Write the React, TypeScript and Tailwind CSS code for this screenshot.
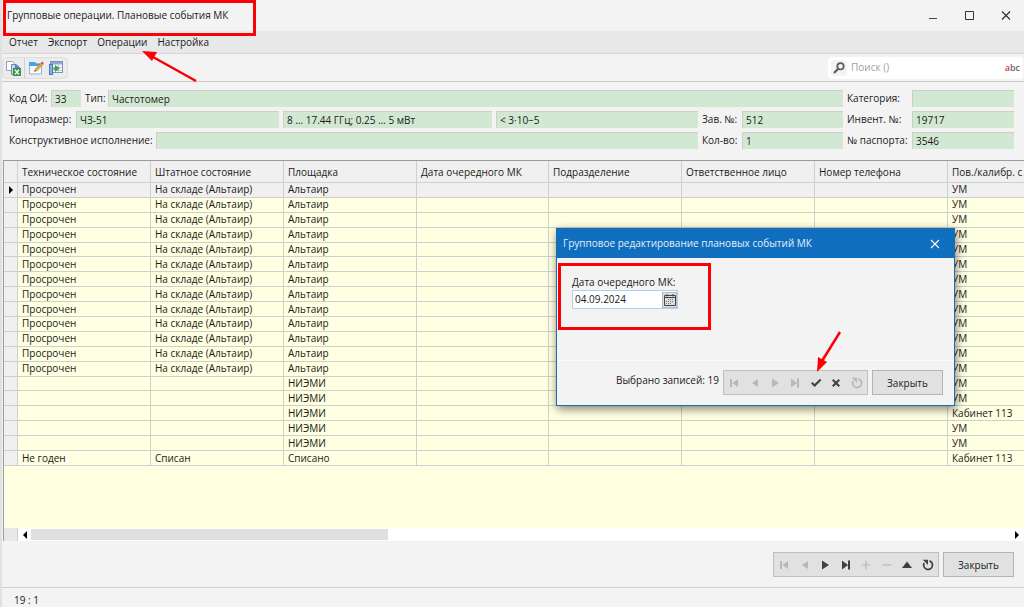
import { clsx } from "clsx";
import type { ReactNode } from "react";

const MENU = ["Отчет", "Экспорт", "Операции", "Настройка"];

const COLUMNS = [
  { name: "Техническое состояние", width: "w-[133px]" },
  { name: "Штатное состояние", width: "w-[133px]" },
  { name: "Площадка", width: "w-[133px]" },
  { name: "Дата очередного МК", width: "w-[132px]" },
  { name: "Подразделение", width: "w-[133px]" },
  { name: "Ответственное лицо", width: "w-[133px]" },
  { name: "Номер телефона", width: "w-[133px]" },
  { name: "Пов./калибр. с", width: "" },
];

type Row = { tech: string; staff: string; site: string; place: string };

const overdue: Row = {
  tech: "Просрочен",
  staff: "На складе (Альтаир)",
  site: "Альтаир",
  place: "УМ",
};
const niemi: Row = { tech: "", staff: "", site: "НИЭМИ", place: "УМ" };

const ROWS: Row[] = [
  ...Array.from({ length: 13 }, () => overdue),
  niemi,
  niemi,
  { ...niemi, place: "Кабинет 113" },
  niemi,
  niemi,
  { tech: "Не годен", staff: "Списан", site: "Списано", place: "Кабинет 113" },
];

const NAV_SHAPES = {
  first: <path d="M2 2h2v8H2zM10 2v8L4.500 6z" />,
  prev: <path d="M9 2v8L3 6z" />,
  next: <path d="M3 1.500v9l7-4.500z" />,
  last: <path d="M8 1.500h2v9H8zM2 1.500v9l6-4.500z" />,
  add: <path d="M5.400 1.500h1.200v3.900h3.900v1.200H6.600v3.900H5.400V6.600H1.500V5.400h3.900z" />,
  remove: <path d="M1.500 5.400h9v1.200h-9z" />,
  edit: <path d="M6 2.500l5 6.500H1z" />,
  post: <path d="M1 6.500l1.600-1.600 2 2L10 1.700l1.400 1.500L4.700 10z" />,
  cancel: (
    <path d="M2 3.400L3.400 2 6 4.600 8.600 2 10 3.400 7.400 6 10 8.600 8.600 10 6 7.400 3.400 10 2 8.600 4.600 6z" />
  ),
  refresh: (
    <>
      <path
        d="M7.500 1.900A4.400 4.400 0 1 1 2.200 4"
        fill="none"
        stroke="currentColor"
        strokeWidth="1.700"
      />
      <path d="M.8.800h5.200V6L4.300 4.300z" />
    </>
  ),
};

type NavName = keyof typeof NAV_SHAPES;
type NavItem = { name: NavName; label: string; enabled?: boolean };

const MAIN_NAV: NavItem[] = [
  { name: "first", label: "Первая запись" },
  { name: "prev", label: "Предыдущая запись" },
  { name: "next", label: "Следующая запись", enabled: true },
  { name: "last", label: "Последняя запись", enabled: true },
  { name: "add", label: "Добавить" },
  { name: "remove", label: "Удалить" },
  { name: "edit", label: "Изменить", enabled: true },
  { name: "refresh", label: "Обновить", enabled: true },
];

const DIALOG_NAV: NavItem[] = [
  { name: "first", label: "Первая запись" },
  { name: "prev", label: "Предыдущая запись" },
  { name: "next", label: "Следующая запись" },
  { name: "last", label: "Последняя запись" },
  { name: "post", label: "Сохранить", enabled: true },
  { name: "cancel", label: "Отменить", enabled: true },
  { name: "refresh", label: "Обновить" },
];

const Navigator = ({ items, className }: { items: NavItem[]; className: string }) => (
  <div className={clsx("flex h-[25px] border border-[#bfbfbf] bg-[#e1e1e1]", className)}>
    {items.map(({ name, label, enabled }) => (
      <button
        key={name}
        type="button"
        aria-label={label}
        disabled={!enabled}
        className={clsx(
          "flex flex-1 items-center justify-center",
          enabled ? "text-[#404040]" : "text-[#b8b8b8]",
        )}
      >
        <svg viewBox="0 0 12 12" className="size-3" fill="currentColor">
          {NAV_SHAPES[name]}
        </svg>
      </button>
    ))}
  </div>
);

const CloseButton = () => (
  <button
    type="button"
    className="h-[25px] w-[71px] border border-[#b4b4b4] bg-[#e1e1e1] pt-0.5 text-[#1a1a1a]"
  >
    Закрыть
  </button>
);

const Field = ({
  id,
  label,
  value,
  className,
  labelClassName,
}: {
  id: string;
  label?: string;
  value: string;
  className?: string;
  labelClassName?: string;
}) => (
  <div className={clsx("flex min-w-0 items-center", className)}>
    {label && (
      <label htmlFor={id} className={clsx("shrink-0 whitespace-nowrap", labelClassName)}>
        {label}
      </label>
    )}
    <input
      id={id}
      readOnly
      aria-label={label ? undefined : id}
      defaultValue={value}
      className="h-[17px] w-full min-w-0 border-t border-l border-[#c8d3c8] bg-[#d3e8d3] px-[3px] outline-none"
    />
  </div>
);

const ExportIcon = () => (
  <svg viewBox="0 0 16 16" className="size-4">
    <path d="M1.500 1.500h6l2 2v7h-8z" fill="#fafcff" stroke="#98a4b8" />
    <path d="M6.500 4.500h5l3 3v7h-8z" fill="#c5daf4" stroke="#7389ad" />
    <path d="M10.500 4.500v3.500h4" fill="#4e7fc8" stroke="#4e7fc8" />
    <rect x="8" y="8" width="8" height="8" fill="#3d9346" />
    <path d="M10 9.800l4 4.600M14 9.800l-4 4.600" stroke="#fff" strokeWidth="1.400" />
  </svg>
);

const EditIcon = () => (
  <svg viewBox="0 0 16 16" className="size-4">
    <path d="M1.500 2.500h5l1 1.500h6v10h-12z" fill="#f4f9ff" stroke="#8fb4d8" />
    <path d="M1 2h6l1 1.500h6V6H1z" fill="#43a2e6" />
    <path d="M6.500 11.500l1-2.700 6-6.300 1.700 1.700-6 6.300z" fill="#f0a33a" stroke="#b87425" strokeWidth="0.500" />
    <path d="M13 3l1.300-1.400 1.600 1.600-1.300 1.400z" fill="#d8533c" />
    <path d="M6.500 11.500l.5-1.500 1 1z" fill="#333" />
  </svg>
);

const TableIcon = () => (
  <svg viewBox="0 0 16 16" className="size-4">
    <rect x="2.500" y="1.500" width="12" height="11" fill="#f7faff" stroke="#7c92b8" />
    <path d="M3 2h11v2.500H3z" fill="#8fa9d4" />
    <path d="M4 7.500h10M4 10.500h10M7.500 4v8M10.500 4v8" stroke="#b9c6dc" />
    <rect x="1.500" y="4.500" width="3" height="10" fill="#87b2ea" stroke="#4a78bd" />
    <path d="M7 5l5 3.300L7 12V9.800H5.500V7.500H7z" fill="#45a23f" />
  </svg>
);

const SearchIcon = () => (
  <svg viewBox="0 0 12 12" className="size-3" fill="none" stroke="#5c5c5c">
    <circle cx="7.500" cy="4.300" r="3.200" strokeWidth="1.700" />
    <path d="M5.200 6.800L1 11" strokeWidth="2.200" />
  </svg>
);

const CalendarIcon = () => (
  <svg viewBox="0 0 12 12" className="size-3" fill="none" stroke="#444">
    <path d="M.5 1.500h11v10H.5zM.5 3.500h11M3 0v2.500M9 0v2.500" />
    <path d="M4 5.500h6M2 7.500h8M2 9.500h6" strokeDasharray="1 1" stroke="#777" />
  </svg>
);

const ToolButton = ({ label, children }: { label: string; children: ReactNode }) => (
  <button type="button" aria-label={label} className="flex w-5 items-center justify-center">
    {children}
  </button>
);

const TitleBar = () => (
  <header className="flex h-[31px] items-center justify-between pl-[5px]">
    <h1>Групповые операции. Плановые события МК</h1>
    <div className="flex">
      <button type="button" aria-label="Свернуть" className="flex w-[37px] justify-center">
        <svg viewBox="0 0 10 10" className="size-2.5" stroke="#444">
          <path d="M1 7.500h8" />
        </svg>
      </button>
      <button type="button" aria-label="Развернуть" className="flex w-[37px] justify-center">
        <svg viewBox="0 0 10 10" className="size-2.5" fill="none" stroke="#333">
          <path d="M.5.500h8v8h-8z" />
        </svg>
      </button>
      <button type="button" aria-label="Закрыть окно" className="flex w-9 justify-center">
        <svg viewBox="0 0 10 10" className="size-2.5" stroke="#333" strokeWidth="1.200">
          <path d="M1 .5l8 8M9 .5l-8 8" />
        </svg>
      </button>
    </div>
  </header>
);

const Toolbar = () => (
  <div className="flex h-7 items-center justify-between border-b border-[#c9c9c9]">
    <div className="flex h-[22px] rounded-sm border border-[#dedede] bg-[#ececec] pr-px">
      <ToolButton label="Экспорт в Excel">
        <ExportIcon />
      </ToolButton>
      <span className="mx-px w-px bg-[#d0d0d0]" />
      <ToolButton label="Редактировать">
        <EditIcon />
      </ToolButton>
      <ToolButton label="Столбцы">
        <TableIcon />
      </ToolButton>
    </div>
    <div className="mr-px flex h-[22px] w-[195px] items-center rounded-sm bg-white px-[3px]">
      <span className="flex size-4 shrink-0 items-center justify-center rounded-sm bg-[#f3f3f3]">
        <SearchIcon />
      </span>
      <input
        type="text"
        aria-label="Поиск"
        placeholder="Поиск ()"
        className="w-full min-w-0 px-1 outline-none placeholder:text-[#a0a0a0]"
      />
      <span className="text-[9px] font-semibold text-[#666]">
        <span className="text-[#d9363c]">a</span>bc
      </span>
    </div>
  </div>
);

const DeviceForm = () => (
  <form className="grid grid-cols-[1fr_141px_167px] gap-x-1 gap-y-1 pt-2 pr-2.5 pb-[11px] pl-[7px]">
    <div className="col-span-2 flex gap-1">
      <Field id="code" label="Код ОИ:" value="33" className="w-[72px]" labelClassName="w-[42px]" />
      <Field id="type" label="Тип:" value="Частотомер" className="flex-1" labelClassName="w-[23px]" />
    </div>
    <Field id="category" label="Категория:" value="" labelClassName="w-[65px]" />
    <div className="flex gap-1">
      <Field
        id="size"
        label="Типоразмер:"
        value="ЧЗ-51"
        className="w-[270px]"
        labelClassName="w-[67px]"
      />
      <Field id="range" value="8 … 17.44 ГГц; 0.25 … 5 мВт" className="w-[209px]" />
      <Field id="accuracy" value="< 3·10−5" className="flex-1" />
    </div>
    <Field id="serial" label="Зав. №:" value="512" labelClassName="w-10" />
    <Field id="inventory" label="Инвент. №:" value="19717" labelClassName="w-[65px]" />
    <Field id="design" label="Конструктивное исполнение:" value="" labelClassName="w-[147px]" />
    <Field id="count" label="Кол-во:" value="1" labelClassName="w-10" />
    <Field id="passport" label="№ паспорта:" value="3546" labelClassName="w-[65px]" />
  </form>
);

const EventsGrid = () => (
  <section className="ml-px flex flex-1 flex-col border-t border-l border-[#9a9a9a] bg-[#ffffe1]">
    <div className="flex-1 overflow-hidden">
      <table className="h-[305px] w-full table-fixed border-separate border-spacing-0 text-left leading-[13px]">
        <colgroup>
          <col className="w-3.5" />
          {COLUMNS.map(({ name, width }) => (
            <col key={name} className={width} />
          ))}
        </colgroup>
        <thead>
          <tr className="h-[22px] bg-[#f0f0f0]">
            <th className="border-r border-b border-[#d0d0d0]" />
            {COLUMNS.map(({ name }) => (
              <th
                key={name}
                className="overflow-hidden border-r border-b border-[#d0d0d0] px-1 pt-0.5 font-normal whitespace-nowrap last:border-r-0 last:pr-0"
              >
                {name}
              </th>
            ))}
          </tr>
        </thead>
        <tbody>
          {ROWS.map((row, i) => (
            <tr key={i} className={i === 0 ? "bg-[#f0f0f0]" : undefined}>
              <td className="border-r border-b border-[#cfcfcf] bg-[#f0f0f0] p-0">
                {i === 0 && (
                  <svg viewBox="0 0 4 8" className="mx-auto h-2 w-1">
                    <path d="M0 0v8l4-4z" />
                  </svg>
                )}
              </td>
              {[row.tech, row.staff, row.site, "", "", "", "", row.place].map((text, j) => (
                <td
                  key={j}
                  className="overflow-hidden border-r border-b border-[#cfcfcf] px-1 py-0 whitespace-nowrap last:border-r-0"
                >
                  {text}
                </td>
              ))}
            </tr>
          ))}
        </tbody>
      </table>
    </div>
    <div className="flex h-[13px] items-center bg-white">
      <span className="h-full w-3.5 border-r border-[#cfcfcf] bg-[#e8e8e8]" />
      <button type="button" aria-label="Прокрутить влево" className="flex w-[13px] justify-center">
        <svg viewBox="0 0 4 8" className="h-2 w-1">
          <path d="M4 0v8L0 4z" />
        </svg>
      </button>
      <div className="h-full flex-1 py-px">
        <div className="h-full w-[36.500%] bg-[#dfdfdf]" />
      </div>
      <button type="button" aria-label="Прокрутить вправо" className="flex w-3.5 justify-center">
        <svg viewBox="0 0 4 8" className="h-2 w-1">
          <path d="M0 0v8l4-4z" />
        </svg>
      </button>
    </div>
  </section>
);

const EditDialog = () => (
  <div
    role="dialog"
    aria-labelledby="dialog-title"
    className="absolute top-[228px] left-[556px] w-[399px] border border-[#1c6cb4] bg-[#f3f3f3] shadow-[1px_3px_9px_rgba(0,0,0,0.5)]"
  >
    <div className="flex h-[29px] items-center justify-between bg-[#106ebe] pl-1.5 text-[#e4effa]">
      <h2 id="dialog-title">Групповое редактирование плановых событий МК</h2>
      <button type="button" aria-label="Закрыть диалог" className="flex w-[39px] justify-center">
        <svg viewBox="0 0 10 10" className="size-2.5" stroke="#fff" strokeWidth="1.100">
          <path d="M1 1l8 8M9 1L1 9" />
        </svg>
      </button>
    </div>
    <div className="h-[102px] px-[15px] pt-[17px]">
      <label htmlFor="next-date" className="block">
        Дата очередного МК:
      </label>
      <div className="flex h-[19px] w-[106px] items-center border border-[#a9d1f5] bg-white">
        <input
          id="next-date"
          type="text"
          defaultValue="04.09.2024"
          className="w-full min-w-0 px-0.5 outline-none"
        />
        <button
          type="button"
          aria-label="Открыть календарь"
          className="flex h-4 w-[15px] shrink-0 items-center justify-center border border-[#bdbdbd] bg-[#dedede]"
        >
          <CalendarIcon />
        </button>
      </div>
    </div>
    <div className="flex items-center justify-end gap-1 border-t border-[#fbfbfb] pt-[9px] pr-[11px] pb-2.5">
      <span className="pb-1">Выбрано записей: 19</span>
      <Navigator items={DIALOG_NAV} className="w-[145px]" />
      <CloseButton />
    </div>
    <div className="absolute top-[34px] left-px h-[67px] w-[153px] border-3 border-[#fb0007]" />
  </div>
);

// Red marks that lead the reader through the steps
const Annotations = () => (
  <div className="pointer-events-none absolute inset-0">
    <div className="absolute top-0 left-[3px] h-9 w-[253px] border-3 border-[#fb0007]" />
    <svg viewBox="0 0 56 32" className="absolute top-[51px] left-[142px] h-8 w-14" fill="#fb0007">
      <path d="M0 0l15 1-5 9z" />
      <path d="M11 6l43 24" stroke="#fb0007" strokeWidth="2.500" />
    </svg>
    <svg viewBox="0 0 26 42" className="absolute top-[331px] left-[816px] h-[42px] w-[26px]" fill="#fb0007">
      <path d="M1 41l1-15 9 5z" />
      <path d="M6 30L24 1" stroke="#fb0007" strokeWidth="2.500" />
    </svg>
  </div>
);

export default function App() {
  return (
    <div className="relative flex min-h-screen flex-col border-l-2 border-[#dde2e2] bg-[#f3f3f3] font-['Open_Sans','Noto_Sans',sans-serif] text-[10px] leading-[15px] text-[#1a1a1a]">
      <TitleBar />
      <nav className="flex h-[23px] items-center gap-2.5 border-b border-[#d6d6d6] bg-[#e8e8e8] pt-px pl-[7px]">
        {MENU.map((item) => (
          <button key={item} type="button">
            {item}
          </button>
        ))}
      </nav>
      <Toolbar />
      <DeviceForm />
      <EventsGrid />
      <div className="flex h-[46px] items-center justify-end gap-1 pt-px pr-2.5">
        <Navigator items={MAIN_NAV} className="w-[166px]" />
        <CloseButton />
      </div>
      <footer className="flex h-5 items-center border-t border-[#cfcfcf] pt-1.5 pl-3">19 : 1</footer>
      <div className="absolute inset-y-0 -left-0.5 w-full">
        <EditDialog />
        <Annotations />
      </div>
    </div>
  );
}
